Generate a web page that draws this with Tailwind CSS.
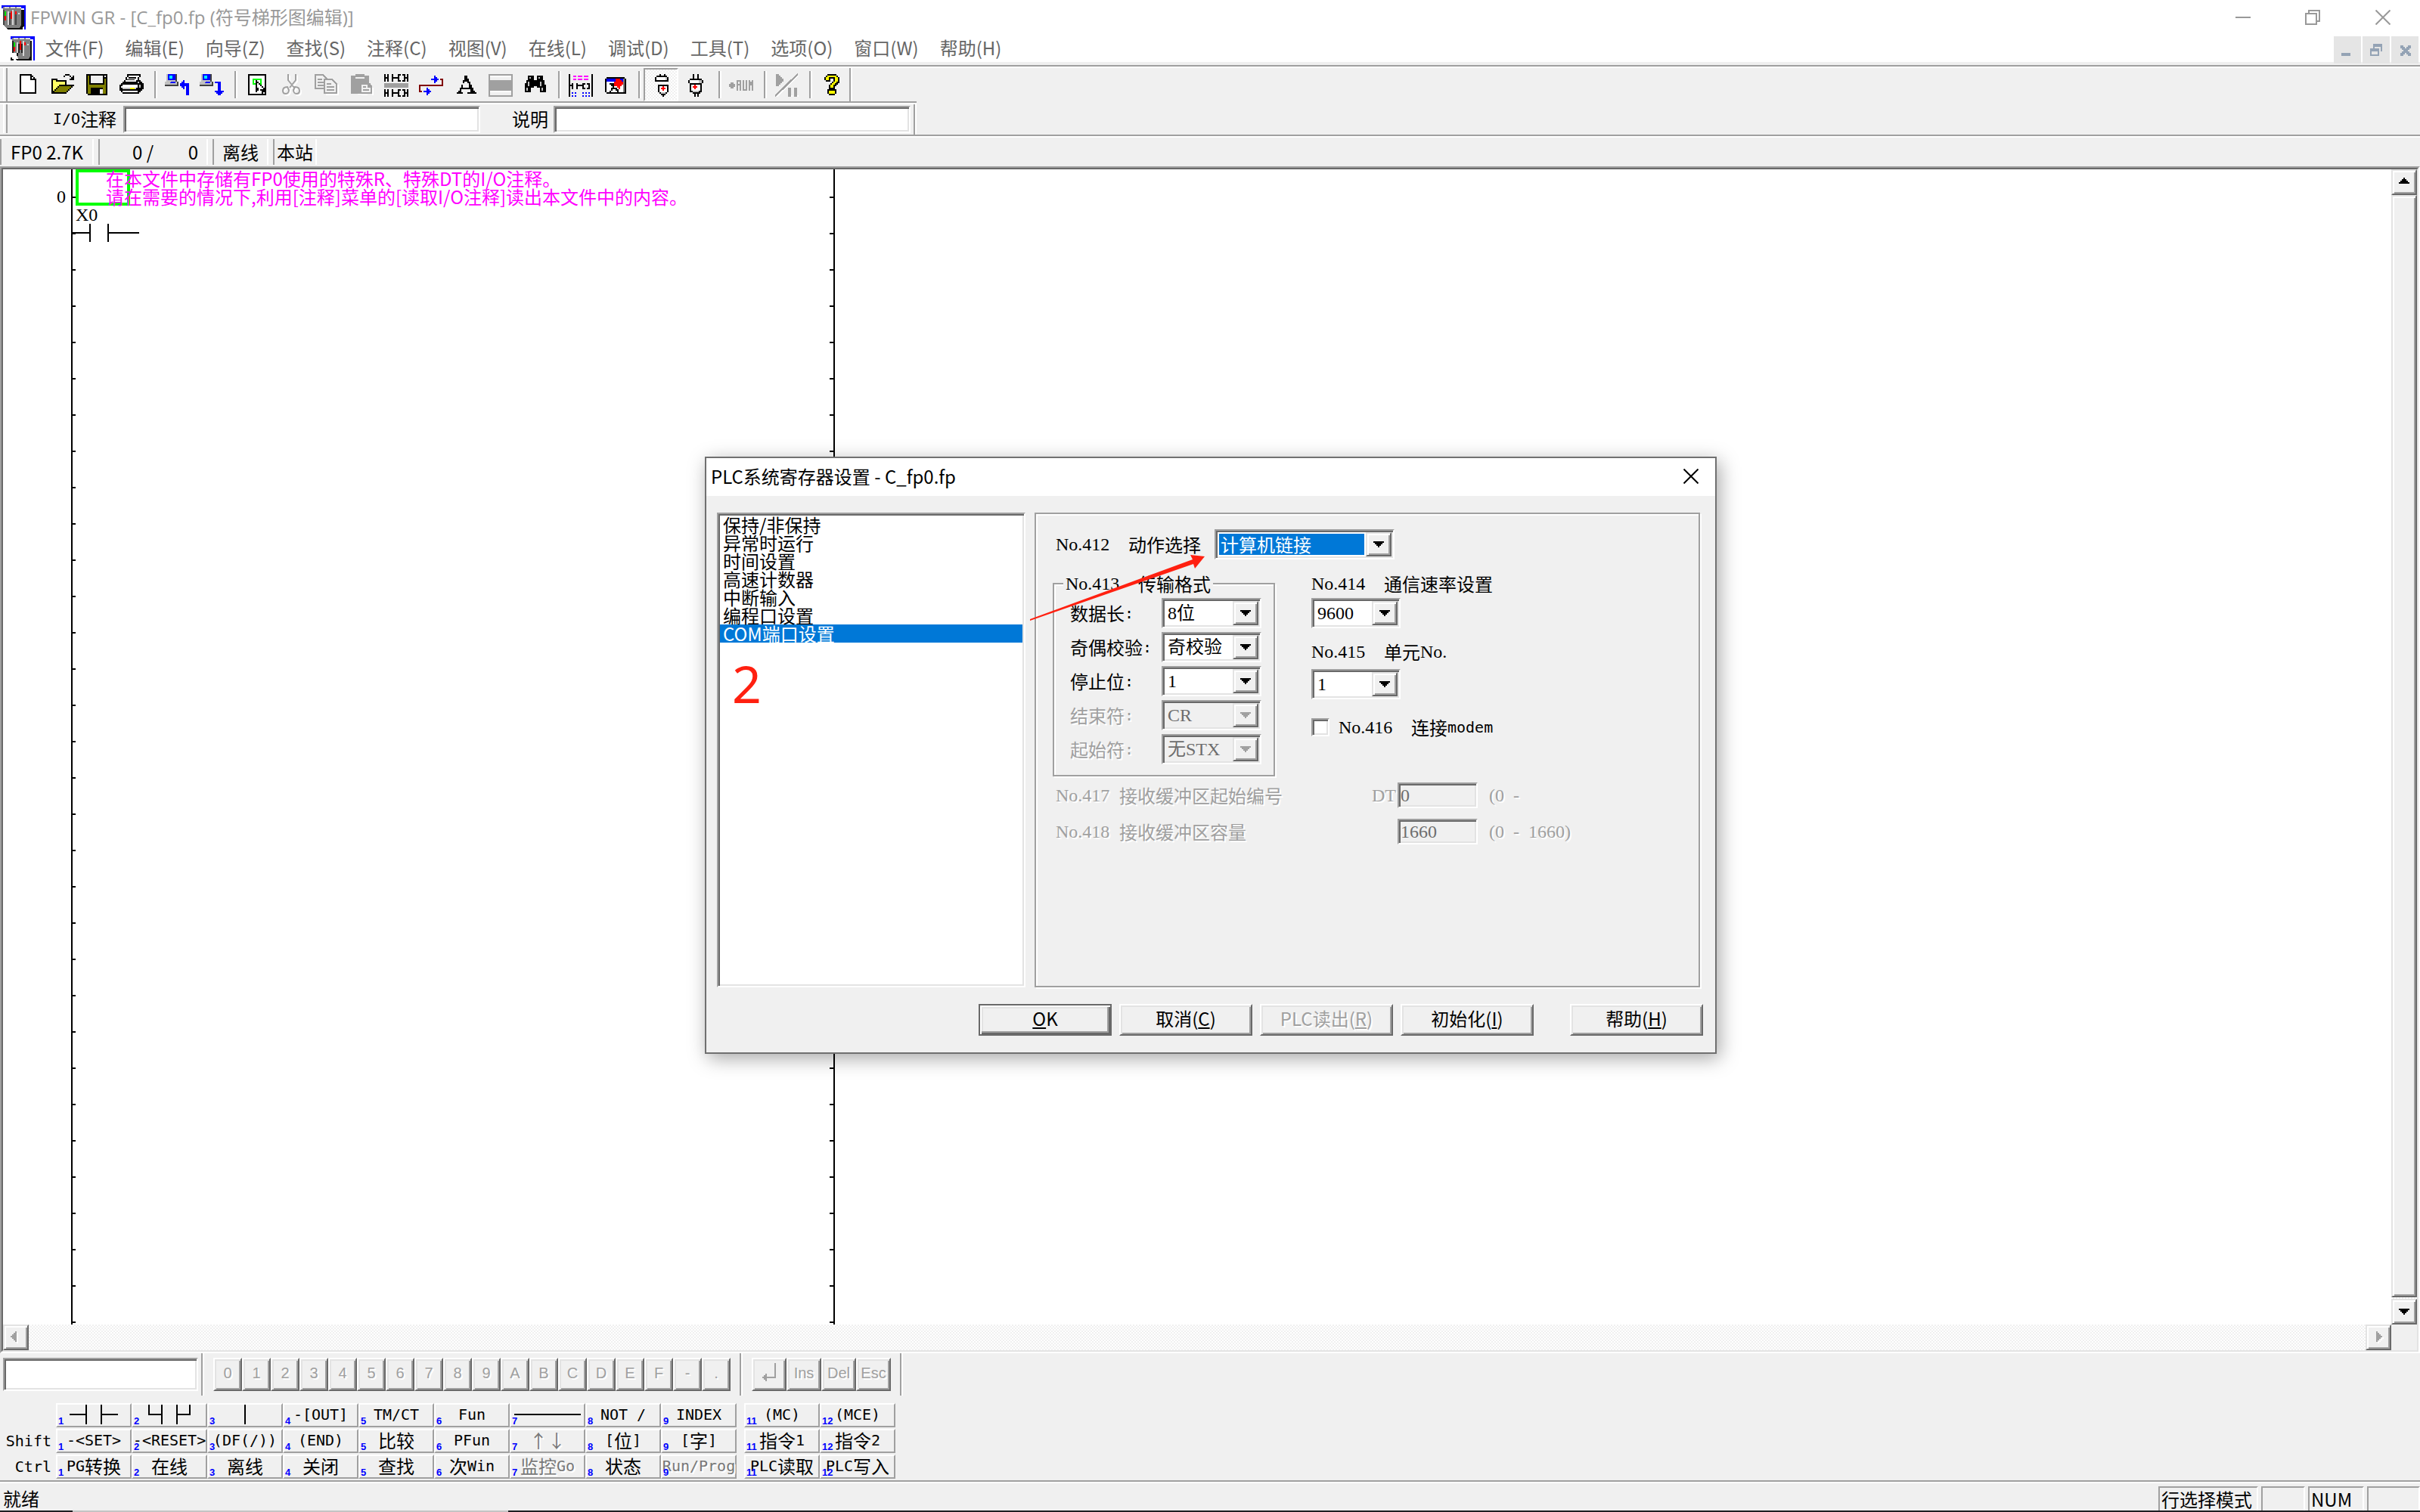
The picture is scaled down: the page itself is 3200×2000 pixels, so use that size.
<!DOCTYPE html>
<html lang="zh-CN">
<head>
<meta charset="utf-8">
<title>FPWIN GR - [C_fp0.fp (符号梯形图编辑)]</title>
<script src="https://cdn.jsdelivr.net/npm/@tailwindcss/browser@4"></script>
</head>
<body class="relative flex h-screen flex-col overflow-hidden bg-[#f0f0f0] font-['Noto_Sans_CJK_SC',sans-serif] text-[24px] leading-[24px] whitespace-nowrap text-black [&_svg]:block">

<header>
  <div class="flex h-[46px] items-center bg-white text-[#999999]">
    <svg class="ml-[2px] mr-[6px] size-8" viewBox="0 0 16 16" shape-rendering="crispEdges" aria-hidden="true">
      <path fill="#0000ff" d="M0 0h16v16h-1V2H0z"/><path fill="#111" d="M2 13h12v3H4zM12 3h3v11l-3 2z"/><path fill="#808080" d="M1 1h12v12l-1 2H3l-2-2z"/><path fill="#d8d8d8" d="M2 1h3v1H2zM6 1h3v1H6zM10 1h3v1h-3zM4 4h1v9H4zM7 3h1v10H7zM11 5h1v1h-1z"/><path fill="#444" d="M1 3h1v10H1zM5 5h1v8H5zM9 5h1v8H9z"/><path fill="#00e000" d="M2 4h1v3H2z"/><path fill="#ff0000" d="M2 7h1v3H2zM6 4h1v5H6zM9 4h1v2H9z"/>
    </svg>
    <h1 class="font-['Open_Sans','Noto_Sans_CJK_SC',sans-serif]">FPWIN GR - [C_fp0.fp (符号梯形图编辑)]</h1>
    <div class="mr-[2px] ml-auto flex h-full items-center">
      <button class="grid h-full w-[92px] place-items-center" aria-label="最小化"><svg class="h-5 w-5" viewBox="0 0 20 20"><path fill="#999" d="M0 9h20v2H0z"/></svg></button>
      <button class="grid h-full w-[92px] place-items-center" aria-label="还原"><svg class="h-5 w-5" viewBox="0 0 20 20" fill="none" stroke="#999" stroke-width="2"><path d="M1 5h14v14H1zM5 5V1h14v14h-4"/></svg></button>
      <button class="grid h-full w-[94px] place-items-center" aria-label="关闭"><svg class="h-5 w-5" viewBox="0 0 20 20" stroke="#999" stroke-width="2"><path d="M.5.5l19 19M19.500 .5l-19 19"/></svg></button>
    </div>
  </div>
  <div class="flex h-9 bg-white text-[#666666]">
    <svg class="ml-[14px] mt-[2px] mr-[14px] size-8" viewBox="0 0 16 16" shape-rendering="crispEdges" aria-hidden="true">
      <path fill="#0000ff" d="M0 0h16v16h-1V2H0z"/><path fill="#111" d="M2 13h12v3H4zM12 3h2v11l-2 2z"/><path fill="#808080" d="M1 1h12v12l-1 2H3l-2-2z"/><path fill="#d8d8d8" d="M2 1h3v1H2zM6 1h3v1H6zM10 1h3v1h-3zM4 4h1v7H4zM8 3h1v10H8zM11 5h1v1h-1z"/><path fill="#222" d="M1 3h1v9H1zM5 5h1v6H5zM7 5h1v6H7z"/><path fill="#00e000" d="M2 4h1v3H2z"/><path fill="#ff0000" d="M2 7h1v3H2zM6 3h1v6H6zM9 4h1v2H9z"/><path fill="#fff" d="M0 11h4l1 4H2z"/><path fill="#111" d="M0 14h1v1h1v1H0zM4 11h1v2H4z"/>
    </svg>
    <nav class="flex items-center gap-[28px] pb-[2px]">
      <a href="#">文件(F)</a><a href="#">编辑(E)</a><a href="#">向导(Z)</a><a href="#">查找(S)</a><a href="#">注释(C)</a><a href="#">视图(V)</a><a href="#">在线(L)</a><a href="#">调试(D)</a><a href="#">工具(T)</a><a href="#">选项(O)</a><a href="#">窗口(W)</a><a href="#">帮助(H)</a>
    </nav>
    <div class="mt-[2px] mr-[2px] ml-auto flex gap-[2px]">
      <button class="size-9 bg-[#e5e5e5] p-[2px]" aria-label="最小化文档"><svg class="size-8" viewBox="0 0 16 16" shape-rendering="crispEdges"><path fill="#94a3b5" d="M4 10h6v2H4z"/></svg></button>
      <button class="size-9 bg-[#e5e5e5] p-[2px]" aria-label="还原文档"><svg class="size-8" viewBox="0 0 16 16" shape-rendering="crispEdges"><path fill="#94a3b5" fill-rule="evenodd" d="M6 4h6v5h-1V6H7v1H6zM4 7h6v5H4zM5 9v2h4V9z"/></svg></button>
      <button class="size-9 bg-[#e5e5e5] p-[2px]" aria-label="关闭文档"><svg class="size-8" viewBox="0 0 16 16" shape-rendering="crispEdges"><path fill="#94a3b5" d="M5 5h2v1h1v1h1V6h1V5h2v2h-1v1h-1v1h1v1h1v2h-2v-1H9v-1H8v1H7v1H5v-2h1V9h1V8H6V7H5z"/></svg></button>
    </div>
  </div>
  <div class="h-1"></div>
  <div class="h-1 border-t-2 border-[#a0a0a0] bg-white"></div>

  <div role="toolbar" aria-label="标准" class="flex h-11 items-center [&_svg]:mx-auto [&_svg]:size-8 [&>button]:h-full [&>button]:w-[46px] [&>i]:ml-[7px] [&>i]:mr-[3px] [&>i]:h-9 [&>i]:w-1 [&>i]:border-l-2 [&>i]:border-[#a0a0a0] [&>i]:bg-white">
    <span class="mr-[3px] ml-1 h-full w-[6px] border-r-2 border-l-2 border-l-white border-r-[#a0a0a0]"></span>
    <button aria-label="新建"><svg viewBox="0 0 16 16" shape-rendering="crispEdges"><path d="M3 1h8v1h1v1h1v1h1v10H3z"/><path fill="#fff" d="M4 2h6v3h3v8H4z"/><path fill="#fff" d="M11 3h1v1h-1z"/></svg></button>
    <button aria-label="打开"><svg viewBox="0 0 16 16" shape-rendering="crispEdges"><path d="M1 4h4v1h6v3h5v1h-1v1h-1v1h-1v1h-1v1h-1v1H1z"/><path fill="#ffff66" d="M2 5h2v1h6v2H6v1H5v1H4v1H3v1H2z"/><path fill="#808000" d="M6 9h8v1h-1v1h-1v1h-1v1H3v-1h1v-1h1v-1h1z"/><path d="M9 2h1v1H9zM10 1h3v1h-3zM13 2h1v1h1V2h1v3h-3V4h1V3h-1z"/></svg></button>
    <button aria-label="保存"><svg viewBox="0 0 16 16" shape-rendering="crispEdges"><path d="M1 1h14v14H2v-1H1z"/><path fill="#808000" d="M2 2h1v6h10V4h1v10h-2v-4H4v4H2z"/><path fill="#f0f0f0" d="M4 2h8v5H4zM13 2h1v1h-1z"/><path fill="#f0f0f0" d="M10 11h2v3h-2z"/></svg></button>
    <button aria-label="打印"><svg viewBox="0 0 16 16" shape-rendering="crispEdges"><path d="M5 1h9v2h-1v2h1v1h1v1h1v4h-1v1h-1v1h-1v1H2v-1H1v-1H0V8h1V7h1V6h1V5h1V3h1z"/><path fill="#fff" d="M6 2h7v1h-1v2h-1v1H4V5h1V3h1z"/><path d="M6 3h5v1H6zM5 5h5v-.5H5z"/><path fill="#fff" d="M2 8h10v1H2zM1 9h11v1H1zM2 12h10v1H2z"/><path fill="#c0c0c0" d="M2 10h9v1H2z"/><path fill="#ffff00" d="M7 10h3v1H7z"/><path fill="#c0c0c0" d="M13 8h1v2h-1zM12 6h1v1h-1z"/></svg></button>
    <i></i>
    <button aria-label="从PLC读取"><svg viewBox="0 0 16 16" shape-rendering="crispEdges"><path fill="#404040" d="M1 1h7v5h1v3H0V6h1z"/><path fill="#c0c0c0" d="M1 1h6v5H1zM0 6h8v2H0z"/><path fill="#0000ff" d="M2 1h5v4H2zM4 6h3v1H3z"/><path fill="#00ffff" d="M3 2h2v2H3z"/><path fill="#0000ff" d="M10 7h1V6h1V5h1v2h3v8h-2V9h-1v2h-1v-1h-1V9h-1z"/></svg></button>
    <button aria-label="写入PLC"><svg viewBox="0 0 16 16" shape-rendering="crispEdges"><path fill="#404040" d="M1 1h7v5h1v3H0V6h1z"/><path fill="#c0c0c0" d="M1 1h6v5H1zM0 6h8v2H0z"/><path fill="#0000ff" d="M2 1h5v4H2zM4 6h3v1H3z"/><path fill="#00ffff" d="M3 2h2v2H3z"/><path fill="#0000ff" d="M10 6h4v6h2v1h-1v1h-1v1h-2v-1h-1v-1h-1v-1h2V7h-2z"/></svg></button>
    <i></i>
    <button aria-label="选择"><svg viewBox="0 0 16 16" shape-rendering="crispEdges"><path d="M2 1h12v14H2z"/><path fill="#fff" d="M3 2h10v12H3z"/><path fill="none" stroke="#00ff00" d="M5.500 4.500h5v3h-5z"/><path d="M7 5h1v1h1v1h1v1h1v1h1v1h1v1h1v4h-1v-2h-1v1h-1v-2h-1v-1H9v1H8v1H7z"/><path fill="#fff" d="M8 7h1v1h1v1h1v1h1v1H9v-1H8z"/></svg></button>
    <button aria-label="剪切" disabled><svg viewBox="0 0 16 16" fill="none" stroke="#a0a0a0" stroke-width="1"><path stroke="#fff" d="M6.500 2v4l4 5M11.500 2v4l-4 5M6 10.500c-2 0-3 1-3 2.500s1 2 2 2 2-1 2-2.500zM11 10.500c2 0 3 1 3 2.500s-1 2-2 2-2-1-2-2.500z"/><path d="M5.500 1v4l4 5M10.500 1v4l-4 5M5 9.500c-2 0-3 1-3 2.500s1 2 2 2 2-1 2-2.500zM10 9.500c2 0 3 1 3 2.500s-1 2-2 2-2-1-2-2.500z"/></svg></button>
    <button aria-label="复制" disabled><svg viewBox="0 0 16 16" fill="none" stroke="#a0a0a0" shape-rendering="crispEdges"><path stroke="#fff" d="M7.500 14.500h8V8"/><path fill="#f0f0f0" d="M.5 1.500h5l3 3v6h-8zM2 4.500h3M2 6.500h4M2 8.500h4"/><path fill="#f0f0f0" d="M6.500 4.500h5l3 3v6h-8zM8 7.500h3M8 9.500h5M8 11.500h5"/></svg></button>
    <button aria-label="粘贴" disabled><svg viewBox="0 0 16 16" shape-rendering="crispEdges"><path fill="#fff" d="M2 14h6v1h8v-5h-1v5z"/><path fill="#a0a0a0" d="M1 2h3V1h6v1h3v5h1v7H1z"/><path fill="#f0f0f0" d="M4 3h6v1H4z"/><path fill="#a0a0a0" d="M7 7h6l2 2v5H7z"/><path fill="#f0f0f0" d="M8 8h4v2h2v3H8z"/><path fill="#a0a0a0" d="M9 9h2v1H9zM9 11h4v1H9z"/></svg></button>
    <button aria-label="梯形图行"><svg viewBox="0 0 16 16" shape-rendering="crispEdges"><path fill="#a0a0a0" d="M0 7h16v3H0z"/><path d="M0 1h1v5H0zM2 1h1v5H2zM1 3h1v1H1zM5 1h1v5H5zM6 3h3v1H6zM9 1h2v1h-1v3h1v1H9zM12 1h2v5h-2V5h1V2h-1zM15 1h1v5h-1zM14 3h1v1h-1z"/><path d="M0 11h1v5H0zM2 11h1v5H2zM1 13h1v1H1zM5 11h1v5H5zM6 13h3v1H6zM9 11h2v1h-1v3h1v1H9zM12 11h2v5h-2v-1h1v-3h-1zM15 11h1v5h-1zM14 13h1v1h-1z"/></svg></button>
    <button aria-label="转换"><svg viewBox="0 0 16 16" shape-rendering="crispEdges"><path fill="none" stroke="#800000" d="M2 12.500H.5v-4h15v-4H14"/><path fill="#0000ff" d="M8 4h2V2h1v1h1v1h1v1h-1v1h-1v1h-1V5H8zM3 12h2v-2h1v1h1v1h1v1H7v1H6v1H5v-2H3z"/></svg></button>
    <button aria-label="文字"><svg viewBox="0 0 16 16" shape-rendering="crispEdges"><path fill-rule="evenodd" d="M7 2h2v2h1v2h1v2h1v2h1v2h1v1h1v1H9v-1h2v-2H5v2h1v1H2v-1h1v-1h1v-2h1V8h1V5h1zM7 6v1H6v3h4V7H9V6z"/></svg></button>
    <button aria-label="窗口分割"><svg viewBox="0 0 16 16" shape-rendering="crispEdges"><path fill="#a0a0a0" d="M0 1h16v15H0z"/><path fill="#f0f0f0" d="M1 2h14v3H1zM1 12h14v3H1z"/><path fill="#fff" d="M1 2h14v1H1zM1 12h14v1H1z"/></svg></button>
    <button aria-label="查找"><svg viewBox="0 0 16 16" shape-rendering="crispEdges"><path d="M3 2h4v3h2V2h4v3h1v3h1v5h-4v-3H9V9H7v1H5v3H1V7h1V5h1z"/><path fill="#c0c0c0" d="M4 3h1v1H4zM10 3h1v1h-1zM3 6h1v3H3zM11 6h1v3h-1zM2 10h1v2H2zM12 10h1v2h-1z"/></svg></button>
    <i></i>
    <button aria-label="注释显示"><svg viewBox="0 0 16 16" shape-rendering="crispEdges"><path d="M0 1h1v15H0zM15 1h1v15h-1zM1 8h1v1H1zM2 7h1v4H2zM5 7h1v4H5zM6 8h3v1H6zM9 7h2v1h-1v2h1v1H9zM12 7h2v4h-2v-1h1V8h-1z"/><path fill="#ff00ff" d="M3 2h2v1H3zM6 2h3v1H6zM10 2h3v1h-3zM3 4h2v1H3zM6 4h3v1H6zM10 4h3v1h-3z"/><path fill="#0000ff" d="M2 13h1v1H2zM4 13h1v1H4zM9 13h1v1H9zM11 13h1v1h-1zM13 13h1v1h-1zM2 15h1v1H2zM4 15h1v1H4zM9 15h1v1H9zM11 15h1v1h-1zM13 15h1v1h-1z"/></svg></button>
    <button aria-label="书签"><svg viewBox="0 0 16 16" shape-rendering="crispEdges"><path d="M2 3h12v1h1v10H2v-1H1V4h1z"/><path fill="#fff" d="M2 6h12v7H2z"/><path fill="#0000ff" d="M2 4h12v2H2z"/><path fill="#808080" d="M13 4h1v9h-1z"/><path d="M5 7h2v3h2v1h1v2H9v-1H8v-1H6v1H5v1H4v-1h1v-2h1V9H5V8H4V7z"/><path fill="#ff0000" d="M8 4h3v1h1v1h1v2h-1v1h-1v2h-1v-1H9V9H7V6h1z"/></svg></button>
    <i></i>
    <button aria-label="离线" aria-pressed="true" class="border-2 border-t-[#a0a0a0] border-r-white border-b-white border-l-[#a0a0a0] bg-[repeating-conic-gradient(#f0f0f0_0_25%,#ffffff_0_50%)] bg-[length:4px_4px] pl-1"><svg viewBox="0 0 16 16" shape-rendering="crispEdges"><path d="M6 1h1v1h2V1h1v1h1v1h1v3H3V3h1V2h2zM5 8h7v5h-1v1h-1v1H9v1H8v-1H7v-1H6v-1H5z"/><path fill="#fff" d="M4 3h6v2H4zM6 9h5v4H6z"/><path fill="#c0c0c0" d="M10 3h1v2h-1zM7 13h3v1H7z"/><path fill="#ff0000" d="M8 9h1v1h1v1H9v1H8v-1H7v-1h1z"/></svg></button>
    <button aria-label="在线"><svg viewBox="0 0 16 16" shape-rendering="crispEdges"><path d="M6 1h1v3h2V1h1v3h2v1h1v2h-1v6h-1v1h-1v2H9v-2H8v2H7v-2H6v-1H4V7H3V5h1V4h2z"/><path fill="#fff" d="M4 5h7v2H4zM5 8h6v4H5z"/><path fill="#c0c0c0" d="M10 5h2v2h-2zM6 12h4v1H6z"/><path fill="#ff0000" d="M7 8h1v1h1v1H8v1H7v-1H6V9h1z"/></svg></button>
    <i></i>
    <button aria-label="RUN" disabled><svg viewBox="0 0 32 32" fill="none" stroke="#a0a0a0" stroke-width="2" shape-rendering="crispEdges"><path fill="#a0a0a0" stroke="none" d="M2 13h4v2h2v4H6v2H2v-2H0v-4h2z"/><path d="M11 24V11h4v5h-4M15 17v7M19 10v13h4V10M27 24V10M28 13h1v4M31 24V10"/></svg></button>
    <i></i>
    <button aria-label="运行/暂停" disabled><svg viewBox="0 0 16 16" shape-rendering="crispEdges"><path fill="#fff" d="M15 2h1L2 16H1zM10 15h2v1h-2zM14 15h2v1h-2z"/><path fill="#a0a0a0" d="M1 1h2v1h1v1h1v1h1v2H5v1H4v1H3v1H1zM9 10h2v6H9zM13 10h2v6h-2z"/><path stroke="#a0a0a0" stroke-width="1.200" d="M.5 15.500l15-14.500"/></svg></button>
    <i></i>
    <button aria-label="帮助"><svg viewBox="0 0 16 16" shape-rendering="crispEdges"><path d="M5 1h6v1h1v1h1v4h-1v1h-1v1h-1v2h1v3h-1v1H6v-1H5v-3h1V8h1V7h1V6h1V4H7v2H4V5H3V3h1V2h1z"/><path fill="#ffff00" d="M5 2h6v1h1v3h-1v1h-1v1H9v2H7V8h1V7h1V6h1V3H6v2H4V3h1zM6 12h4v2H6z"/></svg></button>
    <span class="h-full w-1 border-l-2 border-[#a0a0a0] bg-white"></span>
  </div>
  <div class="h-1 w-[1212px] border-t-2 border-[#a0a0a0] bg-white"></div>

  <form class="flex h-10 items-start">
    <span class="mr-[60px] ml-1 h-[38px] w-[6px] border-r-2 border-l-2 border-l-white border-r-[#a0a0a0]"></span>
    <label for="io" class="flex w-[93px] leading-[38px]"><span class="font-['DejaVu_Sans_Mono',monospace] text-[20px]">I/O</span>注释</label>
    <input id="io" type="text" class="mt-[2px] h-9 w-[472px] border-2 border-t-[#a0a0a0] border-r-white border-b-white border-l-[#a0a0a0] bg-white px-1 shadow-[inset_2px_2px_#696969,inset_-2px_-2px_#e3e3e3]">
    <label for="desc" class="ml-[42px] w-[55px] leading-[38px]">说明</label>
    <input id="desc" type="text" class="mt-[2px] h-9 w-[472px] border-2 border-t-[#a0a0a0] border-r-white border-b-white border-l-[#a0a0a0] bg-white px-1 shadow-[inset_2px_2px_#696969,inset_-2px_-2px_#e3e3e3]">
    <span class="ml-1 h-full w-1 border-l-2 border-[#a0a0a0] bg-white"></span>
  </form>
  <div class="h-1 border-t-2 border-[#a0a0a0] bg-white"></div>
  <div class="flex h-[38px] items-center gap-[6px] text-black [&>div]:flex [&>div]:h-[34px] [&>div]:items-center [&>div]:border-r-2 [&>div]:border-l-2 [&>div]:border-l-[#a0a0a0] [&>div]:border-r-white">
    <div class="w-[124px] pl-3">FP0 2.7K</div>
    <div class="w-[145px] justify-between pr-[11px] pl-[43px]"><span>0 /</span><span>0</span></div>
    <div class="w-[74px] justify-center">离线</div>
    <div class="w-[58px] justify-center">本站</div>
  </div>
</header>

<main class="min-h-0 flex-1 border-2 border-t-[#a0a0a0] border-r-white border-b-white border-l-[#a0a0a0]">
  <div class="grid h-full grid-cols-[1fr_34px] grid-rows-[1fr_34px] border-2 border-t-[#696969] border-r-[#e3e3e3] border-b-[#e3e3e3] border-l-[#696969]">
    <section class="relative overflow-hidden bg-white" aria-label="梯形图">
      <svg class="absolute inset-0 h-full w-[1110px]" shape-rendering="crispEdges" aria-hidden="true">
        <defs><pattern id="ticks" width="1110" height="48" patternUnits="userSpaceOnUse"><path d="M90 0h2v48h-2zM92 36h4v2h-4zM1098 0h2v48h-2zM1093 36h5v2h-5z"/></pattern></defs>
        <rect width="1110" height="100%" fill="url(#ticks)"/>
        <path d="M92 83h23v2H92zM114 72h2v24h-2zM138 72h2v24h-2zM139 83h41v2h-41z"/>
      </svg>
      <span class="absolute top-6 left-[71px] font-['Liberation_Serif',serif]">0</span>
      <div class="absolute top-0 left-24 h-12 w-[72px] border-4 border-[#00ff00]"></div>
      <p class="absolute top-0 left-[136px] text-[#ff00ff]">在本文件中存储有FP0使用的特殊R、特殊DT的I/O注释。<br>请在需要的情况下,利用[注释]菜单的[读取I/O注释]读出本文件中的内容。</p>
      <span class="absolute top-12 left-24 font-['Liberation_Serif',serif]">X0</span>
    </section>
    <div class="flex flex-col bg-[repeating-conic-gradient(#f0f0f0_0_25%,#ffffff_0_50%)] bg-[length:4px_4px]">
      <button aria-label="向上" class="grid h-[34px] place-items-center border-2 border-t-[#e3e3e3] border-r-[#696969] border-b-[#696969] border-l-[#e3e3e3] bg-[#f0f0f0] pb-1 shadow-[inset_2px_2px_#ffffff,inset_-2px_-2px_#a0a0a0]"><svg class="h-2 w-[14px]" viewBox="0 0 7 4" shape-rendering="crispEdges"><path d="M3 0h1v1h1v1h1v1h1v1H0V3h1V2h1V1h1z"/></svg></button>
      <div class="mb-[2px] flex-1 border-2 border-t-[#e3e3e3] border-r-[#696969] border-b-[#696969] border-l-[#e3e3e3] bg-[#f0f0f0] shadow-[inset_2px_2px_#ffffff,inset_-2px_-2px_#a0a0a0]"></div>
      <button aria-label="向下" class="grid h-[34px] place-items-center border-2 border-t-[#e3e3e3] border-r-[#696969] border-b-[#696969] border-l-[#e3e3e3] bg-[#f0f0f0] shadow-[inset_2px_2px_#ffffff,inset_-2px_-2px_#a0a0a0]"><svg class="h-2 w-[14px]" viewBox="0 0 7 4" shape-rendering="crispEdges"><path d="M0 0h7v1H6v1H5v1H4v1H3V3H2V2H1V1H0z"/></svg></button>
    </div>
    <div class="flex justify-between bg-[repeating-conic-gradient(#f0f0f0_0_25%,#ffffff_0_50%)] bg-[length:4px_4px]">
      <button aria-label="向左" disabled class="grid w-[34px] place-items-center border-2 border-t-[#e3e3e3] border-r-[#696969] border-b-[#696969] border-l-[#e3e3e3] bg-[#f0f0f0] pr-1 shadow-[inset_2px_2px_#ffffff,inset_-2px_-2px_#a0a0a0]"><svg class="h-4 w-[10px]" viewBox="0 0 5 8" shape-rendering="crispEdges"><path fill="#fff" d="M4 1h1v7H4z"/><path fill="#a0a0a0" d="M3 0h1v7H3V6H2V5H1V4H0V3h1V2h1V1h1z"/></svg></button>
      <button aria-label="向右" disabled class="grid w-[34px] place-items-center border-2 border-t-[#e3e3e3] border-r-[#696969] border-b-[#696969] border-l-[#e3e3e3] bg-[#f0f0f0] pl-1 shadow-[inset_2px_2px_#ffffff,inset_-2px_-2px_#a0a0a0]"><svg class="h-4 w-[10px]" viewBox="0 0 5 8" shape-rendering="crispEdges"><path fill="#fff" d="M1 8V7h1V6h1V5h1V4h1v1H4v1H3v1H2v1z"/><path fill="#a0a0a0" d="M0 0h1v1h1v1h1v1h1v1H3v1H2v1H1v1H0z"/></svg></button>
    </div>
    <div class="bg-[#f0f0f0]"></div>
  </div>
</main>

<footer>
  <div class="flex h-14 items-start">
    <input type="text" aria-label="输入" class="mt-[6px] ml-1 h-11 w-[258px] border-2 border-t-[#a0a0a0] border-r-white border-b-white border-l-[#a0a0a0] bg-white px-1 shadow-[inset_2px_2px_#696969,inset_-2px_-2px_#e3e3e3]">
    <span class="ml-1 h-full w-1 border-l-2 border-[#a0a0a0] bg-white"></span>
    <div id="digits" class="mt-[6px] ml-3 flex"></div>
    <span class="ml-3 h-full w-1 border-l-2 border-[#a0a0a0] bg-white"></span>
    <div id="edits" class="mt-[6px] ml-3 flex"></div>
    <span class="ml-3 h-full w-1 border-l-2 border-[#a0a0a0] bg-white"></span>
  </div>
  <div id="functions" class="flex flex-col gap-[2px] pt-[10px] pb-[2px]"></div>
  <div class="h-1 border-t-2 border-[#a0a0a0] bg-white"></div>
  <div class="flex h-9 items-end justify-between">
    <span class="flex h-8 items-center pl-1">就绪</span>
    <div class="flex h-8 gap-1 [&>div]:border-t-2 [&>div]:border-r-2 [&>div]:border-l-2 [&>div]:border-t-[#a0a0a0] [&>div]:border-r-white [&>div]:border-l-[#a0a0a0] [&>div]:pl-[2px] [&>div]:leading-[30px]">
      <div class="w-[132px]">行选择模式</div><div class="w-[58px]"></div><div class="w-[74px]">NUM</div><div class="w-[70px]"></div>
    </div>
  </div>
  <div class="flex h-[2px] bg-[#1e1e22]"><span class="ml-24 w-[576px] bg-[#c4c4c4]"></span></div>
</footer>

<div class="absolute inset-0 flex items-center justify-center pb-[2px] pl-[2px]">
<section role="dialog" aria-labelledby="dlg" class="relative border-2 border-[#707070] bg-[#f0f0f0] shadow-[4px_6px_24px_rgba(0,0,0,0.35)]">
  <div class="flex h-[50px] items-center justify-between bg-white pr-[22px] pb-[2px] pl-[6px]">
    <h2 id="dlg">PLC系统寄存器设置 - C_fp0.fp</h2>
    <button aria-label="关闭"><svg class="size-5" viewBox="0 0 20 20" stroke="#000" stroke-width="2"><path d="M.5.5l19 19M19.500 .5l-19 19"/></svg></button>
  </div>
  <div class="flex gap-3 pt-[22px] pr-5 pl-[14px]">
    <ul role="listbox" aria-label="设置项目" class="h-[628px] w-[408px] border-2 border-t-[#a0a0a0] border-r-white border-b-white border-l-[#a0a0a0] bg-white p-[2px] shadow-[inset_2px_2px_#696969,inset_-2px_-2px_#e3e3e3] [&>li]:pl-1">
      <li role="option">保持/非保持</li><li role="option">异常时运行</li><li role="option">时间设置</li><li role="option">高速计数器</li><li role="option">中断输入</li><li role="option">编程口设置</li><li role="option" aria-selected="true" class="bg-[#0078d7] text-white">COM端口设置</li>
    </ul>
    <div class="w-[880px] border-2 border-[#a0a0a0] pt-5 pl-[22px] shadow-[inset_2px_2px_#ffffff,2px_2px_#ffffff]">
      <div class="flex items-center pl-1">
        <label for="mode" class="flex w-[210px]"><span class="w-24 font-['Liberation_Serif',serif]">No.412</span>动作选择</label>
        <div class="flex h-10 w-[238px] border-2 border-t-[#a0a0a0] border-r-white border-b-white border-l-[#a0a0a0] bg-white p-[2px] shadow-[inset_2px_2px_#696969,inset_-2px_-2px_#e3e3e3]">
          <select id="mode" class="m-[2px] min-w-0 flex-1 appearance-none bg-[#0078d7] pl-[2px] leading-[28px] text-white"><option>计算机链接</option></select>
          <span class="grid w-[34px] place-items-center border-2 border-t-[#e3e3e3] border-r-[#696969] border-b-[#696969] border-l-[#e3e3e3] bg-[#f0f0f0] shadow-[inset_2px_2px_#ffffff,inset_-2px_-2px_#a0a0a0]"><svg class="h-2 w-[14px]" viewBox="0 0 7 4" shape-rendering="crispEdges"><path d="M0 0h7v1H6v1H5v1H4v1H3V3H2V2H1V1H0z"/></svg></span>
        </div>
      </div>
      <div class="mt-5 flex">
        <fieldset class="w-[294px] border-2 border-[#a0a0a0] pr-4 pb-[14px] pl-[21px] shadow-[inset_2px_2px_#ffffff,2px_2px_#ffffff]">
          <legend class="-ml-[9px] flex h-6 bg-[#f0f0f0] px-[3px]"><span class="w-24 font-['Liberation_Serif',serif]">No.413</span>传输格式</legend>
          <div id="format" class="flex flex-col gap-[5px] pt-[7px]"></div>
        </fieldset>
        <div class="ml-12 flex flex-col items-start">
          <label for="baud" class="flex h-6"><span class="w-24 font-['Liberation_Serif',serif]">No.414</span>通信速率设置</label>
          <div class="mt-[7px] flex h-10 w-[118px] border-2 border-t-[#a0a0a0] border-r-white border-b-white border-l-[#a0a0a0] bg-white p-[2px] shadow-[inset_2px_2px_#696969,inset_-2px_-2px_#e3e3e3]">
            <select id="baud" class="min-w-0 flex-1 appearance-none bg-transparent pl-1 font-['Liberation_Serif',serif]"><option>9600</option></select>
            <span class="grid w-[34px] place-items-center border-2 border-t-[#e3e3e3] border-r-[#696969] border-b-[#696969] border-l-[#e3e3e3] bg-[#f0f0f0] shadow-[inset_2px_2px_#ffffff,inset_-2px_-2px_#a0a0a0]"><svg class="h-2 w-[14px]" viewBox="0 0 7 4" shape-rendering="crispEdges"><path d="M0 0h7v1H6v1H5v1H4v1H3V3H2V2H1V1H0z"/></svg></span>
          </div>
          <label for="unit" class="mt-[19px] flex h-6"><span class="w-24 font-['Liberation_Serif',serif]">No.415</span>单元<span class="font-['Liberation_Serif',serif]">No.</span></label>
          <div class="mt-[11px] flex h-10 w-[118px] border-2 border-t-[#a0a0a0] border-r-white border-b-white border-l-[#a0a0a0] bg-white p-[2px] shadow-[inset_2px_2px_#696969,inset_-2px_-2px_#e3e3e3]">
            <select id="unit" class="min-w-0 flex-1 appearance-none bg-transparent pl-1 font-['Liberation_Serif',serif]"><option>1</option></select>
            <span class="grid w-[34px] place-items-center border-2 border-t-[#e3e3e3] border-r-[#696969] border-b-[#696969] border-l-[#e3e3e3] bg-[#f0f0f0] shadow-[inset_2px_2px_#ffffff,inset_-2px_-2px_#a0a0a0]"><svg class="h-2 w-[14px]" viewBox="0 0 7 4" shape-rendering="crispEdges"><path d="M0 0h7v1H6v1H5v1H4v1H3V3H2V2H1V1H0z"/></svg></span>
          </div>
          <div class="mt-[25px] flex items-center gap-3">
            <input id="modem" type="checkbox" class="size-6 appearance-none border-2 border-t-[#a0a0a0] border-r-white border-b-white border-l-[#a0a0a0] bg-white shadow-[inset_2px_2px_#696969,inset_-2px_-2px_#e3e3e3]">
            <label for="modem" class="flex h-6"><span class="w-24 font-['Liberation_Serif',serif]">No.416</span>连接<span class="font-['DejaVu_Sans_Mono',monospace] text-[20px]">modem</span></label>
          </div>
        </div>
      </div>
      <div class="mt-2 grid grid-cols-[418px_34px_121px_auto] items-center gap-y-[14px] pl-1 text-[#a0a0a0] [text-shadow:2px_2px_#ffffff]">
        <label for="start" class="flex h-6"><span class="w-[84px] font-['Liberation_Serif',serif]">No.417</span>接收缓冲区起始编号</label>
        <span class="font-['Liberation_Serif',serif]">DT</span>
        <input id="start" value="0" disabled class="h-[34px] w-[106px] border-2 border-t-[#a0a0a0] border-r-white border-b-white border-l-[#a0a0a0] px-[2px] font-['Liberation_Serif',serif] text-[#6d6d6d] shadow-[inset_2px_2px_#696969,inset_-2px_-2px_#e3e3e3] [text-shadow:none]">
        <span class="flex gap-3 font-['Liberation_Serif',serif]"><span>(0</span><span>-</span></span>
        <label for="size" class="flex h-6"><span class="w-[84px] font-['Liberation_Serif',serif]">No.418</span>接收缓冲区容量</label>
        <span></span>
        <input id="size" value="1660" disabled class="h-[34px] w-[106px] border-2 border-t-[#a0a0a0] border-r-white border-b-white border-l-[#a0a0a0] px-[2px] font-['Liberation_Serif',serif] text-[#6d6d6d] shadow-[inset_2px_2px_#696969,inset_-2px_-2px_#e3e3e3] [text-shadow:none]">
        <span class="flex gap-3 font-['Liberation_Serif',serif]"><span>(0</span><span>-</span><span>1660)</span></span>
      </div>
    </div>
  </div>
  <div class="flex justify-end gap-[10px] pt-[22px] pr-4 pb-[22px] [&_u]:underline-offset-2 [&>button]:h-[42px] [&>button]:w-[176px] [&>button]:pb-1">
    <button class="border-2 border-[#696969] shadow-[inset_2px_2px_#ffffff,inset_-2px_-2px_#696969,inset_-4px_-4px_#a0a0a0,inset_4px_4px_#e3e3e3]"><u>O</u>K</button>
    <button class="border-2 border-t-white border-r-[#696969] border-b-[#696969] border-l-white shadow-[inset_2px_2px_#e3e3e3,inset_-2px_-2px_#a0a0a0]">取消(<u>C</u>)</button>
    <button disabled class="border-2 border-t-white border-r-[#696969] border-b-[#696969] border-l-white text-[#a0a0a0] shadow-[inset_2px_2px_#e3e3e3,inset_-2px_-2px_#a0a0a0] [text-shadow:2px_2px_#ffffff]">PLC读出(<u>R</u>)</button>
    <button class="mr-[38px] border-2 border-t-white border-r-[#696969] border-b-[#696969] border-l-white shadow-[inset_2px_2px_#e3e3e3,inset_-2px_-2px_#a0a0a0]">初始化(<u>I</u>)</button>
    <button class="border-2 border-t-white border-r-[#696969] border-b-[#696969] border-l-white shadow-[inset_2px_2px_#e3e3e3,inset_-2px_-2px_#a0a0a0]">帮助(<u>H</u>)</button>
  </div>
  <span class="absolute top-[264px] left-[34px] font-['Noto_Sans',sans-serif] text-[68px] leading-[68px] text-[#ff2010]">2</span>
  <svg class="pointer-events-none absolute top-[122px] left-[426px] h-[96px] w-[240px]" viewBox="0 0 240 96" aria-hidden="true"><path fill="#ff2010" d="M2 91L217 12l-3-6 19 2-13 16-2-6L2 93z"/></svg>
</section>
</div>

<script>
  const raised = "border-2 border-t-white border-r-[#696969] border-b-[#696969] border-l-white shadow-[inset_2px_2px_#e3e3e3,inset_-2px_-2px_#a0a0a0]";
  const esc = s => s.replace(/&/g, "&amp;").replace(/</g, "&lt;").replace(/>/g, "&gt;");
  // Latin runs are set in the half-width face, CJK in the full-width one
  const mixed = s => s.replace(/[\x20-\x7e]+|[^\x20-\x7e]+/g, r => r.charCodeAt(0) < 127
    ? `<span class="font-['DejaVu_Sans_Mono',monospace] text-[20px] whitespace-pre">${esc(r)}</span>` : `<span>${r}</span>`);

  const key = (label, width) => `<button disabled class="grid h-11 place-items-center pb-1 font-['Liberation_Sans',sans-serif] text-[20px] text-[#a0a0a0] [text-shadow:2px_2px_#ffffff] ${width} ${raised}">${label}</button>`;
  document.getElementById("digits").innerHTML = [..."0123456789ABCDEF-."].map(c => key(c, "w-[38px]")).join("");
  const enter = `<svg class="h-[26px] w-[22px]" viewBox="0 0 11 13" shape-rendering="crispEdges" aria-label="Enter"><path fill="#a0a0a0" d="M9 0h1v10H4v2H3v-1H2v-1H1V9h1V8h1V7h1v2h5z"/></svg>`;
  document.getElementById("edits").innerHTML = [enter, "Ins", "Del", "Esc"].map(c => key(c, "w-[46px]")).join("");

  const drawn = {
    contact: `<svg class="h-[26px] w-16" viewBox="0 0 64 26" shape-rendering="crispEdges" aria-label="触点"><path d="M0 12h21v2H0zM21 0h2v26h-2zM41 0h2v26h-2zM43 12h21v2H43z"/></svg>`,
    parallel: `<svg class="h-[26px] w-14" viewBox="0 0 56 26" shape-rendering="crispEdges" aria-label="并联触点"><path d="M0 0h2v12h15v2H0zM17 0h2v26h-2zM37 0h2v26h-2zM39 12h15V0h2v14H39z"/></svg>`,
    vertical: `<svg class="h-[26px] w-[2px]" viewBox="0 0 2 26" aria-label="竖线"><path d="M0 0h2v26H0z"/></svg>`,
    horizontal: `<svg class="h-[2px] w-[88px]" viewBox="0 0 88 2" aria-label="横线"><path d="M0 0h88v2H0z"/></svg>`
  };
  const rows = [
    ["", ["contact", "parallel", "vertical", "-[OUT]", "TM/CT", "Fun", "horizontal", "NOT /", "INDEX", "(MC)", "(MCE)"], []],
    ["Shift", ["-<SET>", "-<RESET>", "(DF(/))", "(END)", "比较", "PFun", "↑↓", "[位]", "[字]", "指令1", "指令2"], [6]],
    ["Ctrl", ["PG转换", "在线", "离线", "关闭", "查找", "次Win", "监控Go", "状态", "Run/Prog", "PLC读取", "PLC写入"], [6, 8]]
  ];
  const numbers = [1, 2, 3, 4, 5, 6, 7, 8, 9, 11, 12];
  document.getElementById("functions").innerHTML = rows.map(([name, keys, off]) =>
    `<div class="flex h-8"><span class="w-[74px] pr-[6px] pt-1 text-right font-['DejaVu_Sans_Mono',monospace] text-[20px]">${name}</span>` +
    keys.map((k, i) => `<button ${off.includes(i) ? "disabled" : ""} class="relative flex w-[100px] items-center justify-center border-2 border-t-white border-r-[#a0a0a0] border-b-[#a0a0a0] border-l-white pb-[2px] ${i === 9 ? "ml-[10px]" : ""} ${off.includes(i) ? "text-[#787878] [text-shadow:2px_2px_#ffffff]" : ""}"><span class="flex">${drawn[k] || mixed(k)}</span><span class="absolute bottom-0 left-[1px] font-['Liberation_Sans',sans-serif] text-[13px] leading-[13px] font-bold text-[#0000ff] [text-shadow:none]">${numbers[i]}</span></button>`).join("") + `</div>`).join("");

  const formats = [["数据长:", "8位", true], ["奇偶校验:", "奇校验", true], ["停止位:", "1", true], ["结束符:", "CR", false], ["起始符:", "无STX", false]];
  document.getElementById("format").innerHTML = formats.map(([label, value, on], i) => `
    <div class="flex h-10 items-center">
      <label for="f${i}" class="flex w-[121px] ${on ? "" : "text-[#a0a0a0] [text-shadow:2px_2px_#ffffff]"}">${mixed(label)}</label>
      <div class="flex h-10 w-[132px] border-2 border-t-[#a0a0a0] border-r-white border-b-white border-l-[#a0a0a0] p-[2px] shadow-[inset_2px_2px_#696969,inset_-2px_-2px_#e3e3e3] ${on ? "bg-white" : "bg-[#f0f0f0]"}">
        <select id="f${i}" ${on ? "" : "disabled"} class="min-w-0 flex-1 appearance-none bg-transparent pl-1 opacity-100 ${on ? "text-black" : "text-[#6d6d6d]"} font-['Liberation_Serif','Noto_Sans_CJK_SC',serif]"><option>${value}</option></select>
        <span class="grid w-[34px] place-items-center border-2 border-t-[#e3e3e3] border-r-[#696969] border-b-[#696969] border-l-[#e3e3e3] bg-[#f0f0f0] shadow-[inset_2px_2px_#ffffff,inset_-2px_-2px_#a0a0a0]"><svg class="h-2 w-[14px] ${on ? "fill-black" : "fill-[#a0a0a0]"}" viewBox="0 0 7 4" shape-rendering="crispEdges"><path d="M0 0h7v1H6v1H5v1H4v1H3V3H2V2H1V1H0z"/></svg></span>
      </div>
    </div>`).join("");
</script>
</body>
</html>
